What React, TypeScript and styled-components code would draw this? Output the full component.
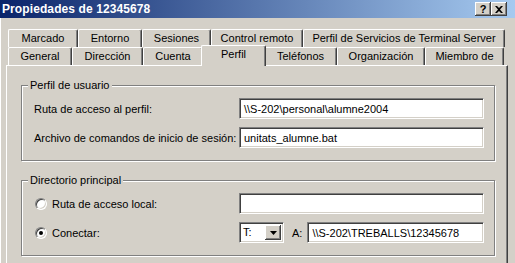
import React from 'react';
import styled, { createGlobalStyle } from 'styled-components';

const GlobalStyle = createGlobalStyle`
  html, body {
    margin: 0;
    padding: 0;
    background: #d4d0c8;
  }
  body {
    font-family: "Liberation Sans", Arial, sans-serif;
    font-size: 11px;
    color: #000;
  }
`;

const rowOne = [
  { label: 'Marcado', width: 70 },
  { label: 'Entorno', width: 64 },
  { label: 'Sesiones', width: 69 },
  { label: 'Control remoto', width: 92 },
  { label: 'Perfil de Servicios de Terminal Server', width: 202 },
];

const rowTwo = [
  { label: 'General', width: 64 },
  { label: 'Dirección', width: 71 },
  { label: 'Cuenta', width: 60 },
  { label: 'Perfil', width: 61, active: true },
  { label: 'Teléfonos', width: 73 },
  { label: 'Organización', width: 88 },
  { label: 'Miembro de', width: 79 },
];

function App() {
  return (
    <Window>
      <GlobalStyle />
      <TitleBar>
        <Title>Propiedades de 12345678</Title>
        <CaptionButtons>
          <CaptionButton>?</CaptionButton>
          <CaptionButton>
            <svg width="8" height="7" viewBox="0 0 8 7">
              <path d="M0 0h2l2 2 2-2h2L5 3.5 8 7H6L4 5 2 7H0l3-3.5z" fill="#000" />
            </svg>
          </CaptionButton>
        </CaptionButtons>
      </TitleBar>
      <Content>
        <TabStrip>
          <TabRow>
            {rowOne.map(t => (
              <Tab key={t.label} width={t.width}>{t.label}</Tab>
            ))}
          </TabRow>
          <TabRow>
            {rowTwo.map(t => (
              <Tab key={t.label} width={t.width} active={t.active}>{t.label}</Tab>
            ))}
          </TabRow>
        </TabStrip>
        <Panel>
          <GroupBox>
            <Legend>Perfil de usuario</Legend>
            <FieldLabel>Ruta de acceso al perfil:</FieldLabel>
            <TextBox>\\S-202\personal\alumne2004</TextBox>
            <FieldLabel>Archivo de comandos de inicio de sesión:</FieldLabel>
            <TextBox>unitats_alumne.bat</TextBox>
          </GroupBox>
          <GroupBox>
            <Legend>Directorio principal</Legend>
            <RadioLabel>
              <Radio />
              Ruta de acceso local:
            </RadioLabel>
            <TextBox />
            <RadioLabel>
              <Radio checked />
              Conectar:
            </RadioLabel>
            <ConnectRow>
              <Combo>
                <ComboValue>T:</ComboValue>
                <ComboButton>
                  <svg width="7" height="4" viewBox="0 0 7 4">
                    <path d="M0 0h7L3.5 4z" fill="#000" />
                  </svg>
                </ComboButton>
              </Combo>
              <ToLabel>A:</ToLabel>
              <TextBox grow>\\S-202\TREBALLS\12345678</TextBox>
            </ConnectRow>
          </GroupBox>
        </Panel>
      </Content>
    </Window>
  );
}
export default App;


const Window = styled.div`
  width: 515px;
  height: 263px;
  overflow: hidden;
  background: #d4d0c8;
  box-shadow: inset 1px 0 #fff;
`;

const TitleBar = styled.div`
  height: 18px;
  display: flex;
  align-items: center;
  justify-content: space-between;
  padding: 0 8px 0 2px;
  background: linear-gradient(to right, #0a246a, #a6caf0);
`;

const Title = styled.span`
  color: #fff;
  font-weight: bold;
  font-size: 12px;
  letter-spacing: 0.1px;
`;

const CaptionButtons = styled.div`
  display: flex;
  gap: 0;
`;

const CaptionButton = styled.div`
  width: 16px;
  height: 14px;
  display: flex;
  align-items: center;
  justify-content: center;
  background: #d4d0c8;
  font-weight: bold;
  font-size: 11px;
  box-shadow: inset -1px -1px #404040, inset 1px 1px #fff, inset -2px -2px #808080;
`;

const Content = styled.div`
  padding: 11px 7px 0 6px;
`;

const TabStrip = styled.div`
  display: flex;
  flex-direction: column;
  padding-left: 2px;
`;

const TabRow = styled.div`
  display: flex;
  height: 18px;
`;

const Tab = styled.div<{ width: number; active?: boolean }>`
  position: relative;
  box-sizing: border-box;
  width: ${props => props.width + (props.active ? 4 : 0)}px;
  height: ${props => props.active ? 21 : 18}px;
  margin: ${props => props.active ? '-2px -2px -1px' : '0'};
  z-index: ${props => props.active ? 1 : 0};
  padding-top: 2px;
  display: flex;
  justify-content: center;
  align-items: flex-start;
  white-space: nowrap;
  background: #d4d0c8;
  border-top: 1px solid #fff;
  border-left: 1px solid #fff;
  border-right: 1px solid #404040;
  border-radius: 2px 2px 0 0;
  box-shadow: inset -1px 0 #808080;
`;

const Panel = styled.div`
  box-sizing: border-box;
  width: 502px;
  height: 210px;
  padding: 19px 12px 0 14px;
  display: flex;
  flex-direction: column;
  gap: 19px;
  border-top: 1px solid #fff;
  border-left: 1px solid #fff;
  border-right: 1px solid #404040;
  box-shadow: inset -1px 0 #808080;
`;

const GroupBox = styled.div`
  position: relative;
  display: grid;
  grid-template-columns: 205px 1fr;
  align-items: center;
  row-gap: 8px;
  padding: 12px 10px 12px 12px;
  border: 1px solid #808080;
  box-shadow: 1px 1px 0 #fff, inset 1px 1px 0 #fff;
`;

const Legend = styled.span`
  position: absolute;
  top: -8px;
  left: 6px;
  padding: 0 2px;
  background: #d4d0c8;
  line-height: 14px;
`;

const FieldLabel = styled.span`
  white-space: nowrap;
`;

const TextBox = styled.div<{ grow?: boolean }>`
  box-sizing: border-box;
  height: 21px;
  ${props => props.grow && 'flex: 1;'}
  padding: 0 4px;
  display: flex;
  align-items: center;
  background: #fff;
  white-space: nowrap;
  border: 1px solid;
  border-color: #808080 #fff #fff #808080;
  box-shadow: inset 1px 1px #404040, inset -1px -1px #d4d0c8;
`;

const RadioLabel = styled.label`
  display: flex;
  align-items: center;
  gap: 5px;
  padding-left: 1px;
`;

const Radio = styled.span<{ checked?: boolean }>`
  box-sizing: border-box;
  width: 12px;
  height: 12px;
  border-radius: 50%;
  background: #fff;
  border: 1px solid;
  border-color: #808080 #fff #fff #808080;
  box-shadow: inset 1px 1px #404040, inset -1px -1px #d4d0c8;
  display: flex;
  align-items: center;
  justify-content: center;
  &::after {
    content: '';
    width: 4px;
    height: 4px;
    border-radius: 50%;
    background: ${props => props.checked ? '#000' : 'transparent'};
  }
`;

const ConnectRow = styled.div`
  display: flex;
  align-items: center;
`;

const Combo = styled.div`
  box-sizing: border-box;
  width: 45px;
  height: 21px;
  padding: 2px;
  display: flex;
  background: #fff;
  border: 1px solid;
  border-color: #808080 #fff #fff #808080;
  box-shadow: inset 1px 1px #404040, inset -1px -1px #d4d0c8;
`;

const ComboValue = styled.span`
  flex: 1;
  padding-left: 1px;
  line-height: 15px;
`;

const ComboButton = styled.span`
  width: 16px;
  display: flex;
  align-items: center;
  justify-content: center;
  background: #d4d0c8;
  box-shadow: inset -1px -1px #404040, inset 1px 1px #fff, inset -2px -2px #808080;
`;

const ToLabel = styled.span`
  margin: 0 5px 0 8px;
`;
